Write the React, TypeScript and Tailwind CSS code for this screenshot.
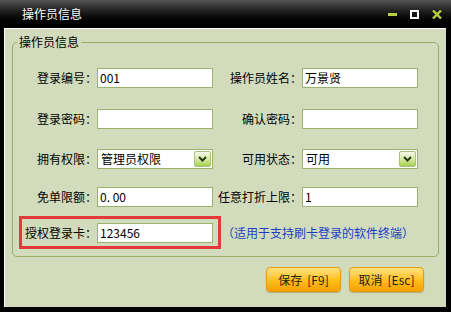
import { ReactNode } from "react";

const font = { fontFamily: '"Noto Sans CJK SC", "Liberation Sans", sans-serif' };

function Field({ value }: { value?: string }) {
  return (
    <div className="flex h-[20px] w-[116px] items-center border border-[#9cb36f] bg-white pl-[2px] text-[12px] leading-none text-black">
      {value}
    </div>
  );
}

function Select({ value }: { value: string }) {
  return (
    <div className="flex h-[20px] w-[116px] items-center justify-between border border-[#9cb36f] bg-white pl-[3px] pr-[1px] text-[12px] leading-none text-black">
      <span>{value}</span>
      <span className="flex h-[16px] w-[17px] items-center justify-center rounded-[2px] border border-[#a9c07c] bg-gradient-to-b from-[#f4f8e8] via-[#d8eaa8] to-[#a8d048]">
        <svg width="9" height="6" viewBox="0 0 9 6">
          <path d="M1 1 L4.5 4.5 L8 1" fill="none" stroke="#2a3a10" strokeWidth="2" />
        </svg>
      </span>
    </div>
  );
}

function Label({ children, w }: { children: ReactNode; w: string }) {
  return <div className={`${w} text-right text-[12px] leading-none text-black`}>{children}</div>;
}

function OrangeButton({ children }: { children: ReactNode }) {
  return (
    <button className="flex h-[25px] w-[75px] items-center justify-center gap-[5px] rounded-[4px] border border-[#e89a10] bg-gradient-to-b from-[#ffe27a] via-[#ffc21c] to-[#f5a000] text-[12px] leading-none text-[#2a2010] shadow-[0_1px_1px_rgba(120,80,0,0.35)]">
      {children}
    </button>
  );
}

export default function App() {
  return (
    <div className="flex h-[312px] w-[451px] flex-col bg-black" style={font}>
      {/* title bar */}
      <div className="flex h-[28px] items-center bg-gradient-to-b from-[#555] via-[#141414] to-black pl-[22px] pr-[9px]">
        <span className="text-[12px] text-white [text-shadow:0_1px_1px_#000]">操作员信息</span>
        <div className="ml-auto flex items-center gap-[13px]">
          <svg width="9" height="9" viewBox="0 0 9 9">
            <rect x="0" y="3" width="9" height="3" fill="#b6d040" />
          </svg>
          <svg width="9" height="9" viewBox="0 0 9 9">
            <rect x="1" y="1" width="7" height="7" fill="none" stroke="#fff" strokeWidth="2" />
          </svg>
          <svg width="10" height="9" viewBox="0 0 10 9">
            <path d="M1 0.5 L9 8.5 M9 0.5 L1 8.5" stroke="#b6d040" strokeWidth="2.4" />
          </svg>
        </div>
      </div>

      {/* client area */}
      <div className="mb-[5px] ml-[4px] mr-[5px] flex flex-1 flex-col border-l border-t border-white bg-[#d2dcbd]">
        <fieldset className="mx-[7px] mt-[5px] rounded-[5px] border border-[#98ae6a] pb-[7px]">
          <legend className="ml-[4px] px-[2px] text-[12px] leading-[16px] text-black">操作员信息</legend>

          <div className="mt-[18px] flex items-center">
            <Label w="w-[84px]">登录编号：</Label>
            <Field value="001" />
            <Label w="w-[89px]">操作员姓名：</Label>
            <Field value="万景贤" />
          </div>

          <div className="mt-[21px] flex items-center">
            <Label w="w-[84px]">登录密码：</Label>
            <Field />
            <Label w="w-[89px]">确认密码：</Label>
            <Field />
          </div>

          <div className="mt-[20px] flex items-center">
            <Label w="w-[84px]">拥有权限：</Label>
            <Select value="管理员权限" />
            <Label w="w-[89px]">可用状态：</Label>
            <Select value="可用" />
          </div>

          <div className="mt-[18px] flex items-center">
            <Label w="w-[84px]">免单限额：</Label>
            <Field value="0. 00" />
            <Label w="w-[89px]">任意打折上限：</Label>
            <Field value="1" />
          </div>

          <div className="mt-[9px] flex items-center">
            <div className="ml-[6px] flex h-[33px] w-[202px] items-center border-[3px] border-[#e23a3a] pl-[3px]">
              <div className="w-[72px] text-[12px] leading-none text-black">授权登录卡：</div>
              <Field value="123456" />
            </div>
            <span className="ml-[1px] text-[12px] leading-none text-[#1c3cc4]">（适用于支持刷卡登录的软件终端）</span>
          </div>
        </fieldset>

        <div className="mr-[22px] mt-[10px] flex justify-end gap-[8px]">
          <OrangeButton>
            <span>保存</span>
            <span>[F9]</span>
          </OrangeButton>
          <OrangeButton>
            <span>取消</span>
            <span>[Esc]</span>
          </OrangeButton>
        </div>
      </div>
    </div>
  );
}
